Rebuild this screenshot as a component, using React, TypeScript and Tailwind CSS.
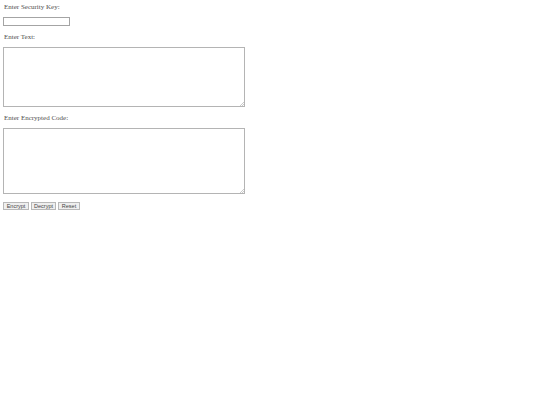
import { useState } from 'react';

const serif = { fontFamily: '"Liberation Serif", "Times New Roman", serif' };
const sans = { fontFamily: '"Liberation Sans", Arial, sans-serif' };

const Grip = () => (
  <svg className="pointer-events-none absolute bottom-[1px] right-[1px]" width="4" height="4" viewBox="0 0 4 4">
    <path d="M4 0 L0 4 M4 2 L2 4" stroke="#a8a8a8" strokeWidth="0.6" />
  </svg>
);

const Area = ({ value, onChange, h }: { value: string; onChange: (v: string) => void; h: string }) => (
  <div className={'relative w-[242px] ' + h}>
    <textarea
      value={value}
      onChange={(e) => onChange(e.target.value)}
      className="block h-full w-full resize-none border border-[#b4b4b4] bg-white p-[1px] text-[7px] outline-none"
      style={sans}
    />
    <Grip />
  </div>
);

export default function App() {
  const [key, setKey] = useState('');
  const [text, setText] = useState('');
  const [code, setCode] = useState('');

  const btn = 'h-[8px] border border-[#b8b8b8] bg-[#efefef] px-[2px] text-[5.5px] leading-[6px] text-[#444]';

  return (
    <div className="min-h-[405px] w-[540px] bg-white px-[3px] pt-[3px] text-[#505050]" style={serif}>
      <p className="pl-[1px] text-[7px] leading-[9px]">Enter Security Key:</p>
      <input
        value={key}
        onChange={(e) => setKey(e.target.value)}
        className="mt-[5px] block h-[9px] w-[67px] border border-[#a4a4a4] bg-white text-[6px] outline-none"
      />
      <p className="mt-[7px] pl-[1px] text-[7px] leading-[9px]">Enter Text:</p>
      <div className="mt-[5px]">
        <Area value={text} onChange={setText} h="h-[60px]" />
      </div>
      <p className="mt-[7px] pl-[1px] text-[7px] leading-[9px]">Enter Encrypted Code:</p>
      <div className="mt-[5px]">
        <Area value={code} onChange={setCode} h="h-[66px]" />
      </div>
      <div className="mt-[8px] flex gap-[2px]" style={sans}>
        <button className={btn + ' w-[26px]'}>Encrypt</button>
        <button className={btn + ' w-[25px]'}>Decrypt</button>
        <button
          className={btn + ' w-[22px]'}
          onClick={() => {
            setKey('');
            setText('');
            setCode('');
          }}
        >
          Reset
        </button>
      </div>
    </div>
  );
}
